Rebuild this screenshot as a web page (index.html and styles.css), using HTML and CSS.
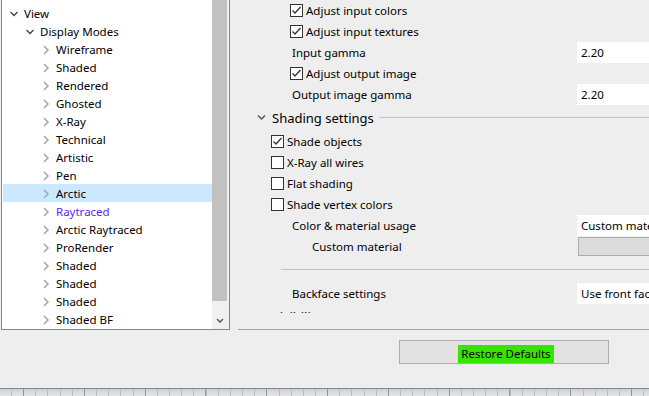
FILE: index.html
```html
<!DOCTYPE html>
<html lang="en">
<head>
<meta charset="UTF-8">
<meta name="viewport" content="width=device-width, initial-scale=1.0">
<title>Display Modes</title>
<link rel="stylesheet" href="styles.css">
</head>
<body>
<div class="window">
    <div class="top">
        <div class="tree">
            <ul class="tree-list">
                <li class="lvl0"><svg class="open" width="14" height="18"><polyline points="0.5,8 4,11.5 7.5,8"/></svg><span>View</span></li>
                <li class="lvl1"><svg class="open" width="14" height="18"><polyline points="0.5,8 4,11.5 7.5,8"/></svg><span>Display Modes</span></li>
                <li class="lvl2"><svg class="closed" width="14" height="18"><polyline points="2,6 6,10 2,14"/></svg><span>Wireframe</span></li>
                <li class="lvl2"><svg class="closed" width="14" height="18"><polyline points="2,6 6,10 2,14"/></svg><span>Shaded</span></li>
                <li class="lvl2"><svg class="closed" width="14" height="18"><polyline points="2,6 6,10 2,14"/></svg><span>Rendered</span></li>
                <li class="lvl2"><svg class="closed" width="14" height="18"><polyline points="2,6 6,10 2,14"/></svg><span>Ghosted</span></li>
                <li class="lvl2"><svg class="closed" width="14" height="18"><polyline points="2,6 6,10 2,14"/></svg><span>X-Ray</span></li>
                <li class="lvl2"><svg class="closed" width="14" height="18"><polyline points="2,6 6,10 2,14"/></svg><span>Technical</span></li>
                <li class="lvl2"><svg class="closed" width="14" height="18"><polyline points="2,6 6,10 2,14"/></svg><span>Artistic</span></li>
                <li class="lvl2"><svg class="closed" width="14" height="18"><polyline points="2,6 6,10 2,14"/></svg><span>Pen</span></li>
                <li class="lvl2 selected"><svg class="closed" width="14" height="18"><polyline points="2,6 6,10 2,14"/></svg><span>Arctic</span></li>
                <li class="lvl2 link"><svg class="closed" width="14" height="18"><polyline points="2,6 6,10 2,14"/></svg><span>Raytraced</span></li>
                <li class="lvl2"><svg class="closed" width="14" height="18"><polyline points="2,6 6,10 2,14"/></svg><span>Arctic Raytraced</span></li>
                <li class="lvl2"><svg class="closed" width="14" height="18"><polyline points="2,6 6,10 2,14"/></svg><span>ProRender</span></li>
                <li class="lvl2"><svg class="closed" width="14" height="18"><polyline points="2,6 6,10 2,14"/></svg><span>Shaded</span></li>
                <li class="lvl2"><svg class="closed" width="14" height="18"><polyline points="2,6 6,10 2,14"/></svg><span>Shaded</span></li>
                <li class="lvl2"><svg class="closed" width="14" height="18"><polyline points="2,6 6,10 2,14"/></svg><span>Shaded</span></li>
                <li class="lvl2"><svg class="closed" width="14" height="18"><polyline points="2,6 6,10 2,14"/></svg><span>Shaded BF</span></li>
            </ul>
            <div class="vscroll">
                <div class="thumb"></div>
                <div class="down"><svg width="8" height="6"><polyline points="1,1 4,4 7,1"/></svg></div>
            </div>
        </div>

        <div class="settings">
            <div class="settings-view">
                <div class="row check-row deep"><span class="box"><svg width="11" height="11"><polyline points="1.5,5.5 4,8 9.5,2"/></svg></span>Adjust input colors</div>
                <div class="row check-row deep"><span class="box"><svg width="11" height="11"><polyline points="1.5,5.5 4,8 9.5,2"/></svg></span>Adjust input textures</div>
                <div class="row field-row"><span class="label">Input gamma</span><span class="value">2.20</span></div>
                <div class="row check-row deep"><span class="box"><svg width="11" height="11"><polyline points="1.5,5.5 4,8 9.5,2"/></svg></span>Adjust output image</div>
                <div class="row field-row"><span class="label">Output image gamma</span><span class="value">2.20</span></div>

                <div class="group-head"><svg width="15" height="8"><polyline points="1,1.5 4.5,5 8,1.5"/></svg><span>Shading settings</span><i class="rule"></i></div>
                <div class="row check-row"><span class="box"><svg width="11" height="11"><polyline points="1.5,5.5 4,8 9.5,2"/></svg></span>Shade objects</div>
                <div class="row check-row"><span class="box"></span>X-Ray all wires</div>
                <div class="row check-row"><span class="box"></span>Flat shading</div>
                <div class="row check-row"><span class="box"></span>Shade vertex colors</div>
                <div class="row field-row"><span class="label">Color &amp; material usage</span><span class="value">Custom material</span></div>
                <div class="row field-row"><span class="label sub">Custom material</span><span class="swatch"></span></div>
                <div class="separator"></div>
                <div class="row field-row"><span class="label">Backface settings</span><span class="value">Use front faces</span></div>

                <div class="group-head"><svg width="15" height="8"><polyline points="1,1.5 4.5,5 8,1.5"/></svg><span>Visibility</span><i class="rule"></i></div>
            </div>
        </div>
    </div>

    <div class="buttons">
        <button class="restore"><span>Restore Defaults</span></button>
    </div>

    <div class="ruler"></div>
</div>
</body>
</html>
```

FILE: styles.css
```css
/* Basic styling */
body {
    margin: 0;
    background-color: #eeeeee;
    font-family: "Noto Sans", "Open Sans", sans-serif;
    font-size: 11.5px;
    color: #000;
}
.window {
    width: 649px;
    height: 396px;
    overflow: hidden;
}
.top {
    display: flex;
    height: 330px;
}

/* tree on the left */
.tree {
    flex: none;
    width: 227px;
    height: 329px;
    margin-left: 1px;
    border: 1px solid #828790;
    border-top: none;
    background-color: #fff;
    display: flex;
    overflow: hidden;
}
.tree-list {
    width: 210px;
    margin: 0;
    padding: 4px 0 0 0;
    list-style: none;
}
.tree-list li {
    height: 18px;
    margin-left: 1px;
    display: flex;
    align-items: center;
    white-space: nowrap;
}
.tree-list li svg {
    flex: none;
    fill: none;
}
.tree-list .lvl0 { padding-left: 7px; }
.tree-list .lvl1 { padding-left: 23px; }
.tree-list .lvl2 { padding-left: 39px; }
.tree-list .open polyline {
    stroke: #404040;
    stroke-width: 1.3;
}
.tree-list .closed polyline {
    stroke: #a6a6a6;
    stroke-width: 1.5;
}
.tree-list .selected {
    background-color: #cce8ff;
}
.tree-list .link {
    color: #5a28f0;
}
.vscroll {
    width: 17px;
    background-color: #f0f0f0;
    display: flex;
    flex-direction: column;
}
.thumb {
    width: 15px;
    height: 301px;
    background-color: #c1c1c1;
}
.down {
    margin-top: auto;
    height: 17px;
    display: flex;
    align-items: center;
    padding-left: 4px;
}
.down svg {
    fill: none;
    stroke: #606060;
    stroke-width: 1.6;
}

/* settings on the right */
.settings {
    flex: 1;
    min-width: 0;
    margin-left: 8px;
    height: 329px;
    border-bottom: 1px solid #a3a3a3;
}
.settings-view {
    height: 313px;
    overflow: hidden;
}
.row {
    height: 21px;
    display: flex;
    align-items: center;
    white-space: nowrap;
}
.check-row {
    padding-left: 33px;
}
.check-row.deep {
    padding-left: 52px;
}
.box {
    width: 11px;
    height: 11px;
    border: 1px solid #333;
    background-color: #fff;
    margin-right: 3px;
    flex: none;
}
.box svg {
    display: block;
    fill: none;
    stroke: #333;
    stroke-width: 1.3;
}
.label {
    width: 339px;
    padding-left: 54px;
    box-sizing: border-box;
    flex: none;
}
.label.sub {
    padding-left: 74px;
}
.value {
    flex: 1;
    height: 21px;
    line-height: 21px;
    padding-left: 4px;
    background-color: #fff;
    overflow: hidden;
}
.swatch {
    flex: 1;
    height: 17px;
    margin: 1px 0 0 1px;
    align-self: flex-start;
    background-color: #dcdcdc;
    border: 1px solid #adadad;
    border-right: none;
}
.group-head {
    height: 26px;
    display: flex;
    align-items: center;
    padding-left: 19px;
    font-size: 13px;
    white-space: nowrap;
}
.group-head svg {
    flex: none;
    fill: none;
    stroke: #555;
    stroke-width: 1.5;
}
.group-head .rule {
    flex: 1;
    height: 1px;
    margin: -1px 0 0 5px;
    background-color: #c4c4c4;
}
.separator {
    height: 26px;
    margin-left: 43px;
    background: linear-gradient(#c2c2c2, #c2c2c2) 0 12px / 100% 1px no-repeat;
}

/* bottom buttons */
.buttons {
    height: 48px;
    padding-left: 399px;
}
.restore {
    margin-top: 10px;
    width: 210px;
    height: 24px;
    padding: 0 0 0 4px;
    border: 1px solid #adadad;
    background-color: #e1e1e1;
    display: flex;
    justify-content: center;
    align-items: flex-end;
    font-family: inherit;
    font-size: inherit;
    color: #000;
}
.restore span {
    height: 18px;
    line-height: 18px;
    padding: 0 3px;
    background-color: #36e400;
}

/* ruler strip at the very bottom */
.ruler {
    height: 17px;
    border-top: 1px solid #7d8b9c;
    background:
        repeating-linear-gradient(90deg, transparent 0, transparent 23px, #8b96a6 23px, #8b96a6 24px, transparent 24px, transparent 60.8px),
        repeating-linear-gradient(90deg, transparent 0, transparent 11px, #b6bec9 11px, #b6bec9 12px, transparent 12px, transparent 12.16px),
        linear-gradient(#c0c6cf, #c0c6cf) 0 8px / 100% 1px no-repeat,
        linear-gradient(#d0d2d6, #e6e7e9) 0 0 / 100% 8px no-repeat,
        #f3f3f3;
}
```
